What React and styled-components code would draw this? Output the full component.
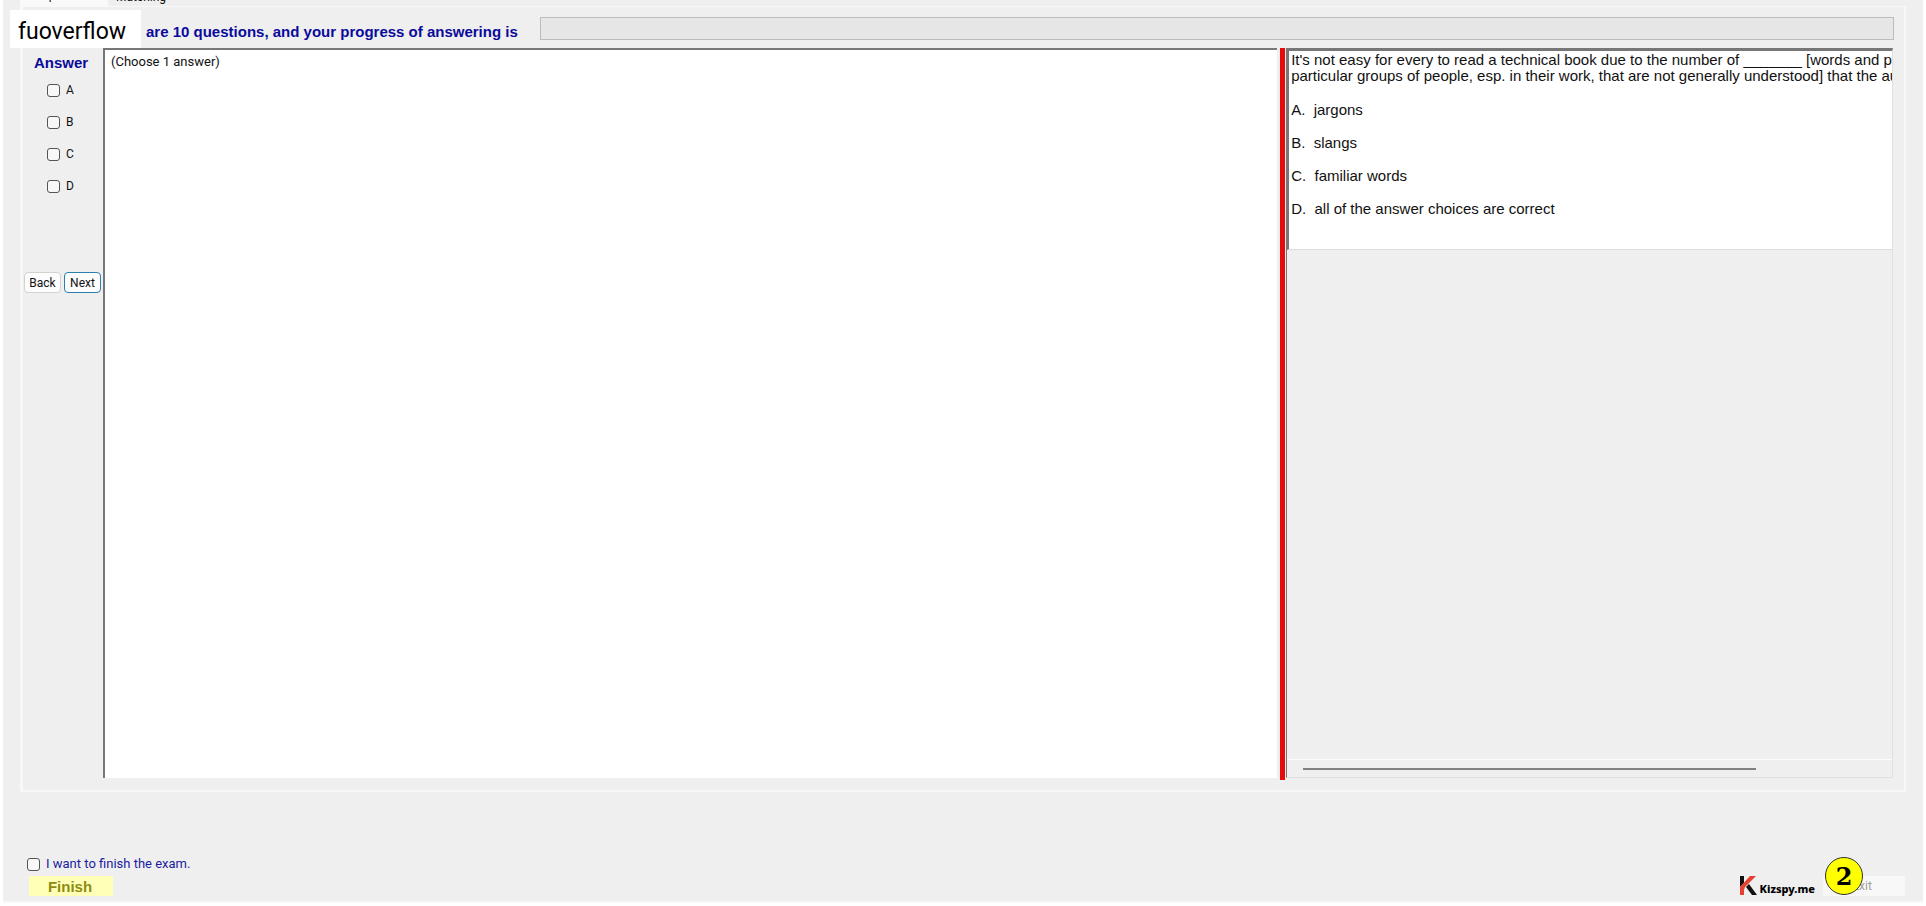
import React from "react";
import styled, { createGlobalStyle } from "styled-components";

const choices = ["A", "B", "C", "D"];

const options = [
  { letter: "A", text: "jargons" },
  { letter: "B", text: "slangs" },
  { letter: "C", text: "familiar words" },
  { letter: "D", text: "all of the answer choices are correct" },
];

const App = () => {
  return (
    <>
      <GlobalStyle />
      <StyledWindow>
        <StyledTabs>
          <StyledTab href="#multiple" $active>Multiple</StyledTab>
          <StyledTab href="#matching">Matching</StyledTab>
        </StyledTabs>

        <StyledTabPage>
          <StyledHeader>
            <StyledBrand>fuoverflow</StyledBrand>
            <StyledSummary>are 10 questions, and your progress of answering is</StyledSummary>
            <StyledProgress role="progressbar" aria-label="Progress" />
          </StyledHeader>

          <StyledBody>
            <StyledAnswers>
              <StyledAnswerTitle>Answer</StyledAnswerTitle>
              {choices.map((choice) => (
                <StyledChoice key={choice}>
                  <StyledCheckbox type="checkbox" />
                  {choice}
                </StyledChoice>
              ))}
              <StyledNav>
                <StyledNavButton type="button">Back</StyledNavButton>
                <StyledNavButton type="button" $focused>Next</StyledNavButton>
              </StyledNav>
            </StyledAnswers>

            <StyledSheet>(Choose 1 answer)</StyledSheet>
            <StyledSplitter />

            <StyledViewer>
              <StyledQuestion>
                <StyledLine>
                  It's not easy for every to read a technical book due to the number of _______ [words and phrases
                </StyledLine>
                <StyledLine>
                  particular groups of people, esp. in their work, that are not generally understood] that the author
                </StyledLine>
                <StyledOptions>
                  {options.map((option) => (
                    <StyledOption key={option.letter}>
                      {option.letter}.{"  "}{option.text}
                    </StyledOption>
                  ))}
                </StyledOptions>
              </StyledQuestion>
              <StyledScroll>
                <StyledThumb />
              </StyledScroll>
            </StyledViewer>
          </StyledBody>
        </StyledTabPage>

        <StyledFooter>
          <StyledFinish>
            <StyledFinishLabel>
              <StyledCheckbox type="checkbox" />
              I want to finish the exam.
            </StyledFinishLabel>
            <StyledFinishButton type="button">Finish</StyledFinishButton>
          </StyledFinish>
          <StyledCorner>
            <StyledLogo>
              <svg width="18" height="20" viewBox="0 0 18 20" aria-hidden="true">
                <path d="M1 0h4v7l-4 4z" fill="#111" />
                <path d="M11 0h6L6 11l-1 3v5H1v-8z" fill="#e8402f" />
                <path d="M7 11l3-3 8 11h-5z" fill="#111" />
              </svg>
              <span>Kizspy.me</span>
            </StyledLogo>
            <StyledExit type="button">
              Exit
              <StyledBadge>2</StyledBadge>
            </StyledExit>
          </StyledCorner>
        </StyledFooter>
      </StyledWindow>
    </>
  );
};

const GlobalStyle = createGlobalStyle`
  * {
    box-sizing: border-box;
  }
  body {
    margin: 0;
    background: white;
    font-family: Roboto, "Liberation Sans", sans-serif;
    font-size: 12px;
    color: #111;
  }
`;

const StyledWindow = styled.main`
  display: flex;
  flex-direction: column;
  min-height: calc(100vh - 3px);
  margin: 0 3px;
  background: #efefef;
  border-bottom: 2px solid #f8f8f8;
  overflow: hidden;
`;

const StyledTabs = styled.nav`
  display: flex;
  height: 6px;
  margin-left: 17px;
  align-items: flex-end;
`;

const StyledTab = styled.a`
  width: ${(props) => (props.$active ? "88px" : "60px")};
  padding: ${(props) => (props.$active ? "0 2px 4px" : "0 8px 2px")};
  line-height: 14px;
  font-size: 12px;
  color: #111;
  text-decoration: none;
  background: ${(props) => (props.$active ? "#f9f9f9" : "transparent")};
`;

const StyledTabPage = styled.section`
  display: flex;
  flex-direction: column;
  flex: 1;
  margin: 0 17px;
  border: 2px solid #f8f8f8;
  border-top-width: 1px;
  border-left-width: 3px;
`;

const StyledHeader = styled.header`
  display: flex;
  align-items: flex-start;
  height: 41px;
  padding-right: 10px;
`;

/* sits over the left edge of the tab page */
const StyledBrand = styled.h1`
  flex: none;
  width: 131px;
  height: 38px;
  margin: 3px 0 0 -13px;
  padding: 0 8px;
  background: white;
  font-size: 23px;
  line-height: 44px;
  font-weight: 400;
  color: black;
  position: relative;
`;

const StyledSummary = styled.p`
  flex: none;
  margin: 16px 22px 0 5px;
  font-family: "Liberation Sans", Arial, sans-serif;
  font-size: 15px;
  line-height: 18px;
  font-weight: 700;
  color: #0a0a9c;
`;

const StyledProgress = styled.div`
  flex: 1;
  height: 23px;
  margin-top: 10px;
  background: #e6e6e6;
  border: 1px solid #bcbcbc;
`;

const StyledBody = styled.div`
  display: flex;
  flex: 1;
  min-width: 0;
  padding: 0 11px 12px 0;
`;

const StyledAnswers = styled.aside`
  flex: none;
  width: 80px;
`;

const StyledAnswerTitle = styled.h2`
  margin: 6px 0 10px 11px;
  font-family: "Liberation Sans", Arial, sans-serif;
  font-size: 15px;
  line-height: 18px;
  color: #0a0a9c;
`;

const StyledCheckbox = styled.input`
  appearance: none;
  width: 13px;
  height: 13px;
  margin: 0;
  background: #f8f8f8;
  border: 1px solid #555;
  border-radius: 3px;
`;

const StyledChoice = styled.label`
  display: flex;
  align-items: center;
  gap: 6px;
  height: 16px;
  margin: 0 0 16px 24px;
`;

const StyledNav = styled.div`
  display: flex;
  gap: 3px;
  margin-top: 78px;
  padding-left: 1px;
`;

const StyledNavButton = styled.button`
  width: 37px;
  height: 21px;
  padding: 0;
  font-family: inherit;
  font-size: 12px;
  color: #111;
  background: #fcfcfc;
  border: 1px solid ${(props) => (props.$focused ? "#2a7fb0" : "#d2d2d2")};
  border-radius: 4px;
`;

const StyledSheet = styled.section`
  flex: 1170 1 0;
  min-width: 0;
  padding: 3px 6px;
  background: white;
  border-top: 2px solid #777;
  border-left: 2px solid #777;
  font-size: 13px;
  line-height: 18px;
`;

const StyledSplitter = styled.div`
  flex: none;
  width: 5px;
  margin: 0 1px -2px 3px;
  background: #e60a0a;
`;

const StyledViewer = styled.section`
  display: flex;
  flex-direction: column;
  flex: 610 1 0;
  min-width: 0;
  border: 1px solid #e0e0e0;
  border-top: 3px solid #777;
  border-left: 1px solid #777;
`;

const StyledQuestion = styled.article`
  height: 199px;
  padding: 1px 0 0 2px;
  overflow: hidden;
  background: white;
  border-left: 2px solid #777;
  border-bottom: 1px solid #dcdcdc;
  font-family: "Liberation Sans", Arial, sans-serif;
  font-size: 15px;
  line-height: 16px;
`;

const StyledLine = styled.p`
  margin: 0;
  white-space: nowrap;
`;

const StyledOptions = styled.div`
  display: grid;
  gap: 17px;
  margin-top: 18px;
`;

const StyledOption = styled.p`
  margin: 0;
  white-space: pre;
`;

const StyledScroll = styled.div`
  height: 18px;
  margin-top: auto;
  padding: 8px 136px 8px 16px;
  border-top: 1px solid #fcfcfc;
`;

const StyledThumb = styled.div`
  height: 2px;
  background: #808080;
`;

const StyledFooter = styled.footer`
  display: flex;
  justify-content: space-between;
  align-items: flex-end;
  height: 109px;
  padding: 0 18px 5px 24px;
`;

const StyledFinish = styled.div`
  display: grid;
  gap: 3px;
`;

const StyledFinishLabel = styled.label`
  display: flex;
  align-items: center;
  gap: 6px;
  font-size: 13px;
  line-height: 18px;
  color: #1c1ca0;
`;

const StyledFinishButton = styled.button`
  width: 84px;
  height: 20px;
  margin-left: 2px;
  padding: 0 2px 0 0;
  border: 0;
  background: #ffffb8;
  font-family: "Liberation Sans", Arial, sans-serif;
  font-size: 15px;
  font-weight: 700;
  color: #8c8c10;
`;

const StyledCorner = styled.div`
  display: flex;
  align-items: flex-end;
  gap: 8px;
`;

const StyledLogo = styled.div`
  display: flex;
  align-items: flex-end;
  gap: 3px;
  font-family: "Noto Sans", "Open Sans", sans-serif;
  font-size: 11px;
  line-height: 14px;
  font-weight: 800;
  color: black;
`;

const StyledExit = styled.button`
  position: relative;
  width: 82px;
  height: 20px;
  padding: 0 4px 0 0;
  border: 0;
  background: #f8f8f8;
  font-family: inherit;
  font-size: 12px;
  color: #a0a0a0;
`;

const StyledBadge = styled.span`
  position: absolute;
  left: 2px;
  bottom: 1px;
  display: grid;
  place-items: center;
  width: 38px;
  height: 38px;
  border: 1px solid #333;
  border-radius: 50%;
  background: #ffff00;
  font-family: "DejaVu Serif", serif;
  font-size: 24px;
  font-weight: 700;
  color: black;
`;

export default App;
